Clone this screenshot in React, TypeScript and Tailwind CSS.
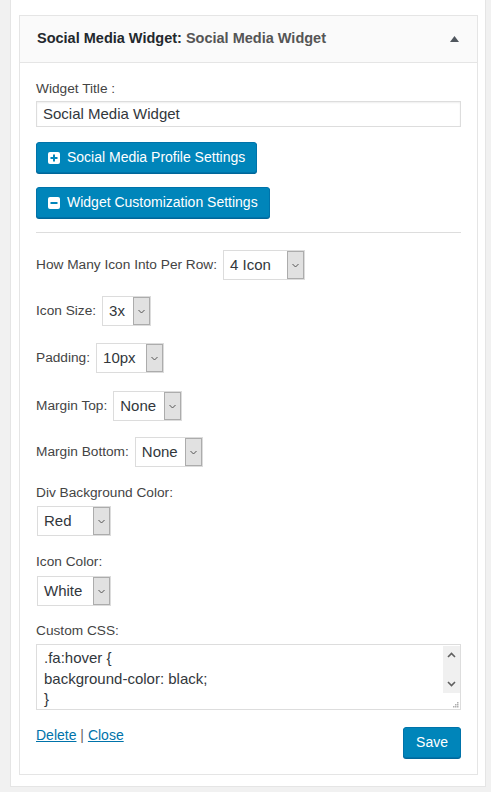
import React from 'react';

const font = { fontFamily: '"Liberation Sans", Arial, sans-serif' };

const Chevron = () => (
  <svg width="7" height="5" viewBox="0 0 7 5" className="block">
    <path d="M0.5 1 L3.5 4 L6.5 1" fill="none" stroke="#555" strokeWidth="1" />
  </svg>
);

const FakeSelect = ({ value, width }: { value: string; width: string }) => (
  <div className={`flex h-[30px] ${width} border border-[#dcdcdc] bg-white`}>
    <div className="flex flex-1 items-center pl-[6px] text-[15px] text-[#32373c]">{value}</div>
    <div className="flex w-[17px] items-center justify-center border border-[#acacac] bg-[#e1e1e1]">
      <Chevron />
    </div>
  </div>
);

const SelectRow = ({ label, value, width, className }: { label: string; value: string; width: string; className: string }) => (
  <div className={`flex items-center gap-[6px] ${className}`}>
    <span className="text-[13.7px] text-[#444]">{label}</span>
    <FakeSelect value={value} width={width} />
  </div>
);

const SquareIcon = ({ plus }: { plus?: boolean }) => (
  <svg width="12" height="12" viewBox="0 0 12 12" className="block">
    <rect x="0" y="0" width="12" height="12" rx="2" fill="#fff" />
    <rect x="2.5" y="5" width="7" height="2" fill="#0085ba" />
    {plus && <rect x="5" y="2.5" width="2" height="7" fill="#0085ba" />}
  </svg>
);

const BlueButton = ({ children, plus }: { children: React.ReactNode; plus?: boolean }) => (
  <button className="inline-flex h-[31px] items-center gap-[7px] rounded-[3px] border border-[#0073aa] bg-[#0085ba] px-[11px] text-[14px] text-white shadow-[0_1px_0_#006799]">
    <SquareIcon plus={plus} />
    {children}
  </button>
);

export default function App() {
  return (
    <div className="min-h-[792px] w-[491px] bg-[#f1f1f1]" style={font}>
      <div className="ml-[10px] w-[476px] border-x border-b border-[#e5e5e5] bg-white pb-[11px] pl-[8px] pr-[7px] pt-[15px]">
        <div className="w-[459px] border border-[#e5e5e5]">
          {/* header */}
          <div className="flex h-[47px] items-center justify-between border-b border-[#e5e5e5] bg-[#fafafa] pl-[17px] pr-[18px]">
            <h3 className="text-[14.5px] font-bold text-[#23282d]">
              Social Media Widget<span>:</span> <span className="text-[#555]">Social Media Widget</span>
            </h3>
            <svg width="9" height="6" viewBox="0 0 9 6" className="block">
              <path d="M4.5 0 L9 6 L0 6 Z" fill="#50575e" />
            </svg>
          </div>

          {/* body */}
          <div className="px-[16px] pb-[16px] pt-[16px]">
            <div className="text-[13.7px] leading-5 text-[#444]">Widget Title :</div>
            <div className="mt-[2px] flex h-[26px] w-full items-center border border-[#ddd] pl-[6px] text-[15px] text-[#32373c] shadow-[inset_0_1px_2px_rgba(0,0,0,0.07)]">
              Social Media Widget
            </div>

            <div className="mt-[15px]">
              <BlueButton plus>Social Media Profile Settings</BlueButton>
            </div>
            <div className="mt-[14px]">
              <BlueButton>Widget Customization Settings</BlueButton>
            </div>

            <div className="mt-[14px] border-t border-[#dddddd]" />

            <SelectRow className="mt-[17px]" label="How Many Icon Into Per Row:" value="4 Icon" width="w-[82px]" />
            <SelectRow className="mt-[16px]" label="Icon Size:" value="3x" width="w-[49px]" />
            <SelectRow className="mt-[17px]" label="Padding:" value="10px" width="w-[68px]" />
            <SelectRow className="mt-[18px]" label="Margin Top:" value="None" width="w-[69px]" />
            <SelectRow className="mt-[16px]" label="Margin Bottom:" value="None" width="w-[68px]" />

            <div className="mt-[16px] text-[13.7px] leading-5 text-[#444]">Div Background Color:</div>
            <div className="mt-[3px] pl-[1px]">
              <FakeSelect value="Red" width="w-[74px]" />
            </div>

            <div className="mt-[16px] text-[13.7px] leading-5 text-[#444]">Icon Color:</div>
            <div className="mt-[4px] pl-[1px]">
              <FakeSelect value="White" width="w-[74px]" />
            </div>

            <div className="mt-[15px] text-[13.7px] leading-5 text-[#444]">Custom CSS:</div>
            <div className="mt-[3px] flex h-[66px] w-full border border-[#ddd] bg-white">
              <div className="flex-1 overflow-hidden pl-[7px] pt-[3px] text-[15px] leading-[20.5px] text-[#32373c]">
                <div>.fa:hover {'{'}</div>
                <div>background-color: black;</div>
                <div>{'}'}</div>
              </div>
              <div className="flex w-[17px] flex-col">
                <div className="mt-[1px] flex h-[47px] flex-col items-center justify-between bg-[#f0f0f0] py-[6px]">
                  <svg width="9" height="6" viewBox="0 0 9 6" className="block">
                    <path d="M1 5 L4.5 1.5 L8 5" fill="none" stroke="#606060" strokeWidth="1.6" />
                  </svg>
                  <svg width="9" height="6" viewBox="0 0 9 6" className="block">
                    <path d="M1 1 L4.5 4.5 L8 1" fill="none" stroke="#606060" strokeWidth="1.6" />
                  </svg>
                </div>
                <div className="flex flex-1 items-end justify-end pb-[1px] pr-[1px]">
                  <svg width="7" height="7" viewBox="0 0 7 7" className="block">
                    <rect x="5" y="1" width="1.5" height="1.5" fill="#b0b0b0" />
                    <rect x="3" y="3" width="1.5" height="1.5" fill="#b0b0b0" />
                    <rect x="5" y="3" width="1.5" height="1.5" fill="#b0b0b0" />
                    <rect x="1" y="5" width="1.5" height="1.5" fill="#b0b0b0" />
                    <rect x="3" y="5" width="1.5" height="1.5" fill="#b0b0b0" />
                    <rect x="5" y="5" width="1.5" height="1.5" fill="#b0b0b0" />
                  </svg>
                </div>
              </div>
            </div>

            <div className="mt-[15px] flex items-start justify-between">
              <div className="text-[14px] leading-5 text-[#666]">
                <a href="#" className="text-[#0073aa] underline">Delete</a>
                {' | '}
                <a href="#" className="text-[#0073aa] underline">Close</a>
              </div>
              <button className="mt-[2px] h-[31px] rounded-[3px] border border-[#0073aa] bg-[#0085ba] px-[12px] text-[14px] text-white shadow-[0_1px_0_#006799]">
                Save
              </button>
            </div>
          </div>
        </div>
      </div>
    </div>
  );
}
